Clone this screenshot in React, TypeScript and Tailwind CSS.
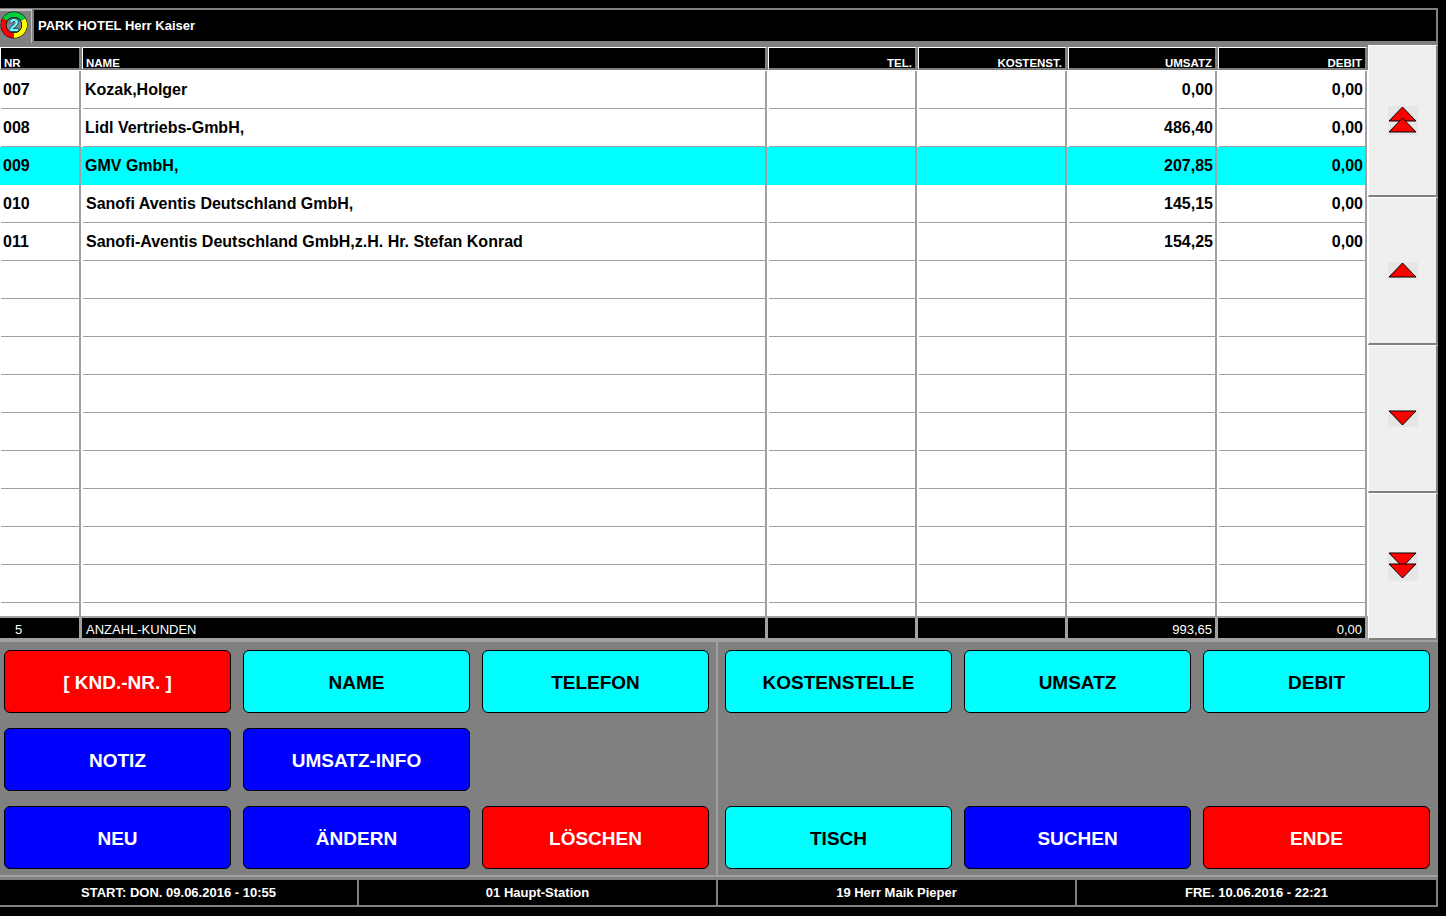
import type { ReactNode } from 'react';

const FONT = "font-['Liberation_Sans',Arial,sans-serif]";
const HEAD_COLS = 'grid grid-cols-[82px_686px_150px_150px_150px_150px]';
const BODY_COLS = 'grid grid-cols-[81px_686px_150px_150px_150px_150px]';

interface Customer {
  nr?: string;
  name?: string;
  umsatz?: string;
  debit?: string;
  active?: boolean;
  indent?: boolean;
}

const CUSTOMERS: Customer[] = [
  { nr: '007', name: 'Kozak,Holger', umsatz: '0,00', debit: '0,00' },
  { nr: '008', name: 'Lidl Vertriebs-GmbH,', umsatz: '486,40', debit: '0,00' },
  { nr: '009', name: 'GMV GmbH,', umsatz: '207,85', debit: '0,00', active: true },
  { nr: '010', name: 'Sanofi Aventis Deutschland GmbH,', umsatz: '145,15', debit: '0,00', indent: true },
  { nr: '011', name: 'Sanofi-Aventis Deutschland GmbH,z.H. Hr. Stefan Konrad', umsatz: '154,25', debit: '0,00', indent: true },
];

const EMPTY_ROWS = Array.from({ length: 10 });

function HeadCell({ children, right }: { children?: ReactNode; right?: boolean }) {
  return (
    <div
      className={`h-[23px] bg-black border-t border-l border-white border-b-2 border-b-[#808080] border-r-[3px] border-r-[#808080] text-[11.5px] leading-[10px] font-bold text-white flex items-end ${
        right ? 'justify-end pr-[3px]' : 'pl-[3px]'
      }`}
    >
      {children}
    </div>
  );
}

function RowCell({ children, active, className }: { children?: ReactNode; active?: boolean; className?: string }) {
  return (
    <div className={`h-[38px] border-r-2 border-[#a0a0a0] ${active ? 'bg-[#00ffff]' : 'bg-white'}`}>
      <div className={`h-full flex items-center text-[16px] font-bold text-black whitespace-pre ${active ? '' : 'border-b border-[#a0a0a0]'} ${className ?? 'ml-[2px]'}`}>
        {children}
      </div>
    </div>
  );
}

function Row({ nr, name, umsatz, debit, active, indent }: Customer) {
  return (
    <div className={BODY_COLS}>
      <RowCell active={active} className="ml-[1px] pl-[2px]">{nr}</RowCell>
      <RowCell active={active} className={indent ? 'ml-[2px] pl-[3px]' : 'ml-[2px] pl-[2px]'}>{name}</RowCell>
      <RowCell active={active} />
      <RowCell active={active} />
      <RowCell active={active} className="ml-[2px] justify-end pr-[2px]">{umsatz}</RowCell>
      <RowCell active={active} className="ml-[2px] justify-end pr-[2px]">{debit}</RowCell>
    </div>
  );
}

function FootCell({ children, right, className }: { children?: ReactNode; right?: boolean; className?: string }) {
  return (
    <div
      className={`h-[24px] pt-[2px] bg-black border-t-2 border-b-2 border-r-[3px] border-[#a0a0a0] text-[13px] leading-[13px] text-white flex items-center ${
        right ? 'justify-end pr-[3px]' : ''
      } ${className ?? 'pl-[4px]'}`}
    >
      {children}
    </div>
  );
}

function Arrow({ up, double }: { up?: boolean; double?: boolean }) {
  const h = double ? 29 : 17;
  const tri = (y: number) =>
    up
      ? `M14.5 ${y} L28 ${y + 14} L1 ${y + 14} Z`
      : `M1 ${y} L28 ${y} L14.5 ${y + 14} Z`;
  return (
    <svg width="30" height={h} viewBox={`0 0 30 ${h}`} className="bg-[#e6e6e6]">
      <path d={tri(1)} fill="#ff0000" stroke="#000" strokeWidth="1" />
      {double && <path d={tri(12)} fill="#ff0000" stroke="#000" strokeWidth="1" />}
    </svg>
  );
}

function ScrollBtn({ h, children }: { h: string; children: ReactNode }) {
  return (
    <div className={`${h} bg-[#efefef] border-t border-l border-white border-b-2 border-b-[#808080] border-r-2 border-r-[#808080] flex items-center justify-center`}>
      {children}
    </div>
  );
}

function Btn({ color, children }: { color: 'red' | 'cyan' | 'blue'; children: ReactNode }) {
  const colors = {
    red: 'bg-[#ff0000] text-white',
    cyan: 'bg-[#00ffff] text-black',
    blue: 'bg-[#0000ff] text-white',
  };
  return (
    <div className={`w-[227px] h-[63px] pt-[3px] rounded-[6px] border border-black flex items-center justify-center text-[19px] font-bold ${colors[color]}`}>
      {children}
    </div>
  );
}

function Logo() {
  return (
    <svg width="28" height="28" viewBox="0 0 28 28">
      <circle cx="14" cy="14" r="13.5" fill="#000" />
      <path d="M4.9 8.75 A10.5 10.5 0 0 1 23.1 8.75" fill="none" stroke="#00d040" strokeWidth="5" />
      <path d="M4.9 8.75 A10.5 10.5 0 0 0 14 24.5" fill="none" stroke="#ff0000" strokeWidth="5" />
      <path d="M23.1 8.75 A10.5 10.5 0 0 1 14 24.5" fill="none" stroke="#ffff00" strokeWidth="5" />
      <circle cx="14" cy="14" r="8" fill="#000" />
      <circle cx="14" cy="14" r="7.5" fill="#808890" />
      <text x="14" y="20" textAnchor="middle" fontSize="17" fontWeight="bold" fill="#70ffff" stroke="#204050" strokeWidth="1.5" paintOrder="stroke" fontFamily="Liberation Sans">2</text>
    </svg>
  );
}

export default function App() {
  return (
    <div className={`w-[1446px] h-[916px] bg-black pt-[8px] overflow-hidden ${FONT}`}>
      <div className="w-[1438px]">
        {/* Title bar */}
        <div className="flex h-[37px] bg-[#808080]">
          <div className="w-[32px] h-[34px] mt-[1px] border-t-2 border-r border-[#c0c0c0] flex items-start">
            <Logo />
          </div>
          <div className="flex-1 h-[31px] ml-[2px] mt-[2px] mr-[2px] bg-black text-white text-[13px] font-bold pl-[4px] flex items-center">
            PARK HOTEL Herr Kaiser
          </div>
        </div>

        <div className="flex bg-[#808080]">
          {/* Table */}
          <div className="w-[1368px] bg-[#a0a0a0]">
            <div className="h-[2px] bg-[#808080]" />
            <div className={HEAD_COLS}>
              <HeadCell>NR</HeadCell>
              <HeadCell>NAME</HeadCell>
              <HeadCell right>TEL.</HeadCell>
              <HeadCell right>KOSTENST.</HeadCell>
              <HeadCell right>UMSATZ</HeadCell>
              <HeadCell right>DEBIT</HeadCell>
            </div>
            <div className="h-[546px] pt-[1px] overflow-hidden bg-white">
              {CUSTOMERS.map((c) => (
                <Row key={c.nr} {...c} />
              ))}
              {EMPTY_ROWS.map((_, i) => (
                <Row key={i} />
              ))}
            </div>
            <div className={HEAD_COLS}>
              <FootCell className="pl-[15px]">5</FootCell>
              <FootCell>ANZAHL-KUNDEN</FootCell>
              <FootCell />
              <FootCell />
              <FootCell right>993,65</FootCell>
              <FootCell right>0,00</FootCell>
            </div>
          </div>
          {/* Scroll buttons */}
          <div className="w-[70px] flex flex-col">
            <ScrollBtn h="h-[152px]"><Arrow up double /></ScrollBtn>
            <ScrollBtn h="h-[148px]"><Arrow up /></ScrollBtn>
            <ScrollBtn h="h-[148px]"><Arrow /></ScrollBtn>
            <ScrollBtn h="h-[147px]"><Arrow double /></ScrollBtn>
          </div>
        </div>

        {/* Button panels */}
        <div className="flex h-[237px] bg-[#808080] border-t-2 border-b-2 border-[#a0a0a0]">
          <div className="w-[718px] border-r-2 border-[#a0a0a0] pl-[4px] pt-[8px] grid grid-cols-[227px_227px_227px] grid-rows-[63px_63px_63px] gap-x-[12px] gap-y-[15px] content-start">
            <Btn color="red">[ KND.-NR. ]</Btn>
            <Btn color="cyan">NAME</Btn>
            <Btn color="cyan">TELEFON</Btn>
            <Btn color="blue">NOTIZ</Btn>
            <Btn color="blue">UMSATZ-INFO</Btn>
            <div />
            <Btn color="blue">NEU</Btn>
            <Btn color="blue">ÄNDERN</Btn>
            <Btn color="red">LÖSCHEN</Btn>
          </div>
          <div className="flex-1 pl-[7px] pt-[8px] grid grid-cols-[227px_227px_227px] grid-rows-[63px_63px_63px] gap-x-[12px] gap-y-[15px] content-start">
            <Btn color="cyan">KOSTENSTELLE</Btn>
            <Btn color="cyan">UMSATZ</Btn>
            <Btn color="cyan">DEBIT</Btn>
            <div />
            <div />
            <div />
            <Btn color="cyan">TISCH</Btn>
            <Btn color="blue">SUCHEN</Btn>
            <Btn color="red">ENDE</Btn>
          </div>
        </div>

        {/* Status bar */}
        <div className="h-[30px] bg-black border-t-[3px] border-b-2 border-r-2 border-[#808080] grid grid-cols-[359px_359px_359px_1fr] text-white text-[13px] font-bold">
          <div className="border-r-2 border-[#808080] flex items-center justify-center">START: DON. 09.06.2016 - 10:55</div>
          <div className="border-r-2 border-[#808080] flex items-center justify-center">01 Haupt-Station</div>
          <div className="border-r-2 border-[#808080] flex items-center justify-center">19 Herr Maik Pieper</div>
          <div className="flex items-center justify-center">FRE. 10.06.2016 - 22:21</div>
        </div>
      </div>
    </div>
  );
}
